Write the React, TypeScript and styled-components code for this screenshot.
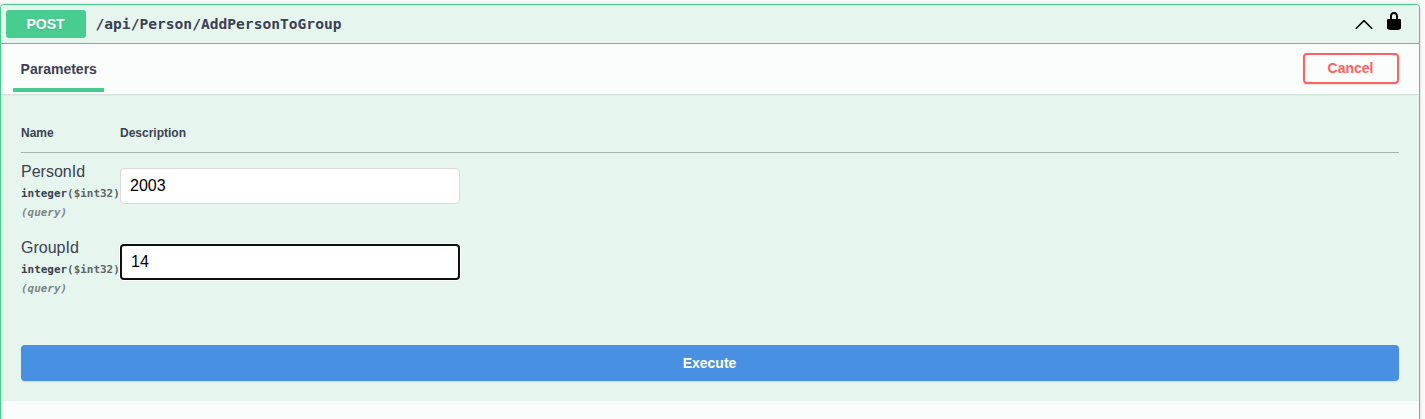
import React, { useState } from 'react';
import styled, { createGlobalStyle } from 'styled-components';

const GlobalStyle = createGlobalStyle`
  *, *::before, *::after { box-sizing: border-box; }
  html, body { margin: 0; background: #fafafa; overflow: hidden; }
  body { font-family: "Liberation Sans", Arial, sans-serif; color: #3b4151; }
`;

const mono = '"DejaVu Sans Mono", monospace';

const Page = styled.main`
  height: 419px;
  padding: 4px 5px 0 0;
  overflow: hidden;
`;

const Block = styled.section`
  height: 500px;
  border: 1px solid #49cc90;
  border-radius: 4px;
  background: #fbfdfc;
  box-shadow: 0 0 3px rgba(0, 0, 0, 0.19);
  overflow: hidden;
`;

const Summary = styled.header`
  display: flex;
  align-items: center;
  height: 39px;
  padding: 0 15px 0 5px;
  border-bottom: 1px solid #49cc90;
  background: #e6f5ee;
`;

const Method = styled.span`
  width: 80px;
  height: 28px;
  padding-right: 1px;
  border-radius: 3px;
  background: #49cc90;
  color: #fff;
  font-size: 14px;
  font-weight: 700;
  line-height: 28px;
  text-align: center;
  text-shadow: 0 1px 0 rgba(0, 0, 0, 0.1);
`;

const Path = styled.span`
  flex: 1;
  padding-left: 9.5px;
  font: 700 14.6px/20px ${mono};
`;

const Chevron = styled.svg`
  width: 20px;
  height: 20px;
  margin: 0 10px 1px 0;
`;

const Lock = styled.svg`
  width: 20px;
  height: 20px;
  margin-bottom: 6px;
`;

const SectionHeader = styled.div`
  position: relative;
  display: flex;
  align-items: flex-start;
  justify-content: space-between;
  height: 50px;
  padding: 9px 20px 0 12px;
  background: #fbfdfc;
  box-shadow: 0 1px 2px rgba(0, 0, 0, 0.1);
`;

const Tab = styled.h4`
  align-self: flex-end;
  width: 91px;
  height: 33px;
  margin: 0 0 2px;
  padding-left: 7.6px;
  border-bottom: 4px solid #49cc90;
  font-size: 14px;
  line-height: 20px;
`;

const Button = styled.button`
  border-radius: 4px;
  font-family: inherit;
  font-size: 14px;
  font-weight: 700;
  padding: 0 1px 0 0;
  box-shadow: 0 1px 2px rgba(0, 0, 0, 0.1);
`;

const CancelButton = styled(Button)`
  width: 96px;
  height: 31px;
  padding-bottom: 2px;
  border: 2px solid #ff6060;
  background: transparent;
  color: #ff6060;
`;

const ExecuteButton = styled(Button)`
  display: block;
  width: 100%;
  height: 36px;
  border: 0;
  background: #4990e2;
  color: #fff;
`;

const Body = styled.div`
  height: 307px;
  padding: 29px 20px 0;
  background: #e6f5ee;
`;

const Row = styled.div`
  display: grid;
  grid-template-columns: 99px 1fr;
  height: 76px;
`;

const HeadRow = styled(Row)`
  height: 30px;
  margin-bottom: 8px;
  border-bottom: 1px solid #a5b5b2;
  font-size: 12px;
  font-weight: 700;
  line-height: 20px;
`;

const Name = styled.div`
  font-size: 16px;
  line-height: 22px;
`;

const Type = styled.div`
  margin-top: 1px;
  font: 700 10.95px/20px ${mono};
  white-space: nowrap;
`;

const Format = styled.span`
  color: #5f6568;
`;

const Location = styled.div`
  font: italic 700 10.95px/18px ${mono};
  color: #808684;
`;

const Field = styled.input`
  width: 340px;
  height: 36px;
  margin-top: 7px;
  padding: 0 9px;
  border: 1px solid #d9d9d9;
  border-radius: 4px;
  background: #fff;
  color: #000;
  font: 16px "Liberation Sans", Arial, sans-serif;
  outline: none;

  &[data-active='true'] {
    border: 2px solid #101010;
    box-shadow: 0 0 0 1px #fff;
  }
`;

const Actions = styled.div`
  padding-top: 32px;
`;

interface Parameter {
  name: string;
  initial: string;
  active: boolean;
}

const parameters: Parameter[] = [
  { name: 'PersonId', initial: '2003', active: false },
  { name: 'GroupId', initial: '14', active: true },
];

function ParameterRow({ name, initial, active }: Parameter) {
  const [value, setValue] = useState(initial);
  return (
    <Row>
      <div>
        <Name>{name}</Name>
        <Type>integer<Format>($int32)</Format></Type>
        <Location>(query)</Location>
      </div>
      <Field
        aria-label={name}
        data-active={active}
        value={value}
        onChange={(e) => setValue(e.target.value)}
      />
    </Row>
  );
}

export default function App() {
  return (
    <Page>
      <GlobalStyle />
      <Block>
        <Summary>
          <Method>POST</Method>
          <Path>/api/Person/AddPersonToGroup</Path>
          <Chevron viewBox="0 0 20 20">
            <path d="M17.418 14.908c.272.268.709.268.979 0s.271-.701 0-.969l-7.908-7.83c-.27-.268-.707-.268-.979 0l-7.908 7.83c-.27.268-.27.701 0 .969.271.268.709.268.979 0L10 7.767z" />
          </Chevron>
          <Lock viewBox="0 0 20 20">
            <path d="M15.8 8H14V5.6C14 2.703 12.665 1 10 1 7.334 1 6 2.703 6 5.6V8H4c-.553 0-1 .646-1 1.199V17c0 .549.428 1.139.951 1.307l1.197.387C5.672 18.861 6.55 19 7.1 19h5.8c.549 0 1.428-.139 1.951-.307l1.196-.387c.524-.167.953-.757.953-1.306V9.199C17 8.646 16.352 8 15.8 8zM12 8H8V5.199C8 3.754 8.797 3 10 3c1.203 0 2 .754 2 2.199V8z" />
          </Lock>
        </Summary>
        <SectionHeader>
          <Tab>Parameters</Tab>
          <CancelButton>Cancel</CancelButton>
        </SectionHeader>
        <Body>
          <HeadRow>
            <span>Name</span>
            <span>Description</span>
          </HeadRow>
          {parameters.map((p) => (
            <ParameterRow key={p.name} {...p} />
          ))}
          <Actions>
            <ExecuteButton>Execute</ExecuteButton>
          </Actions>
        </Body>
      </Block>
    </Page>
  );
}
